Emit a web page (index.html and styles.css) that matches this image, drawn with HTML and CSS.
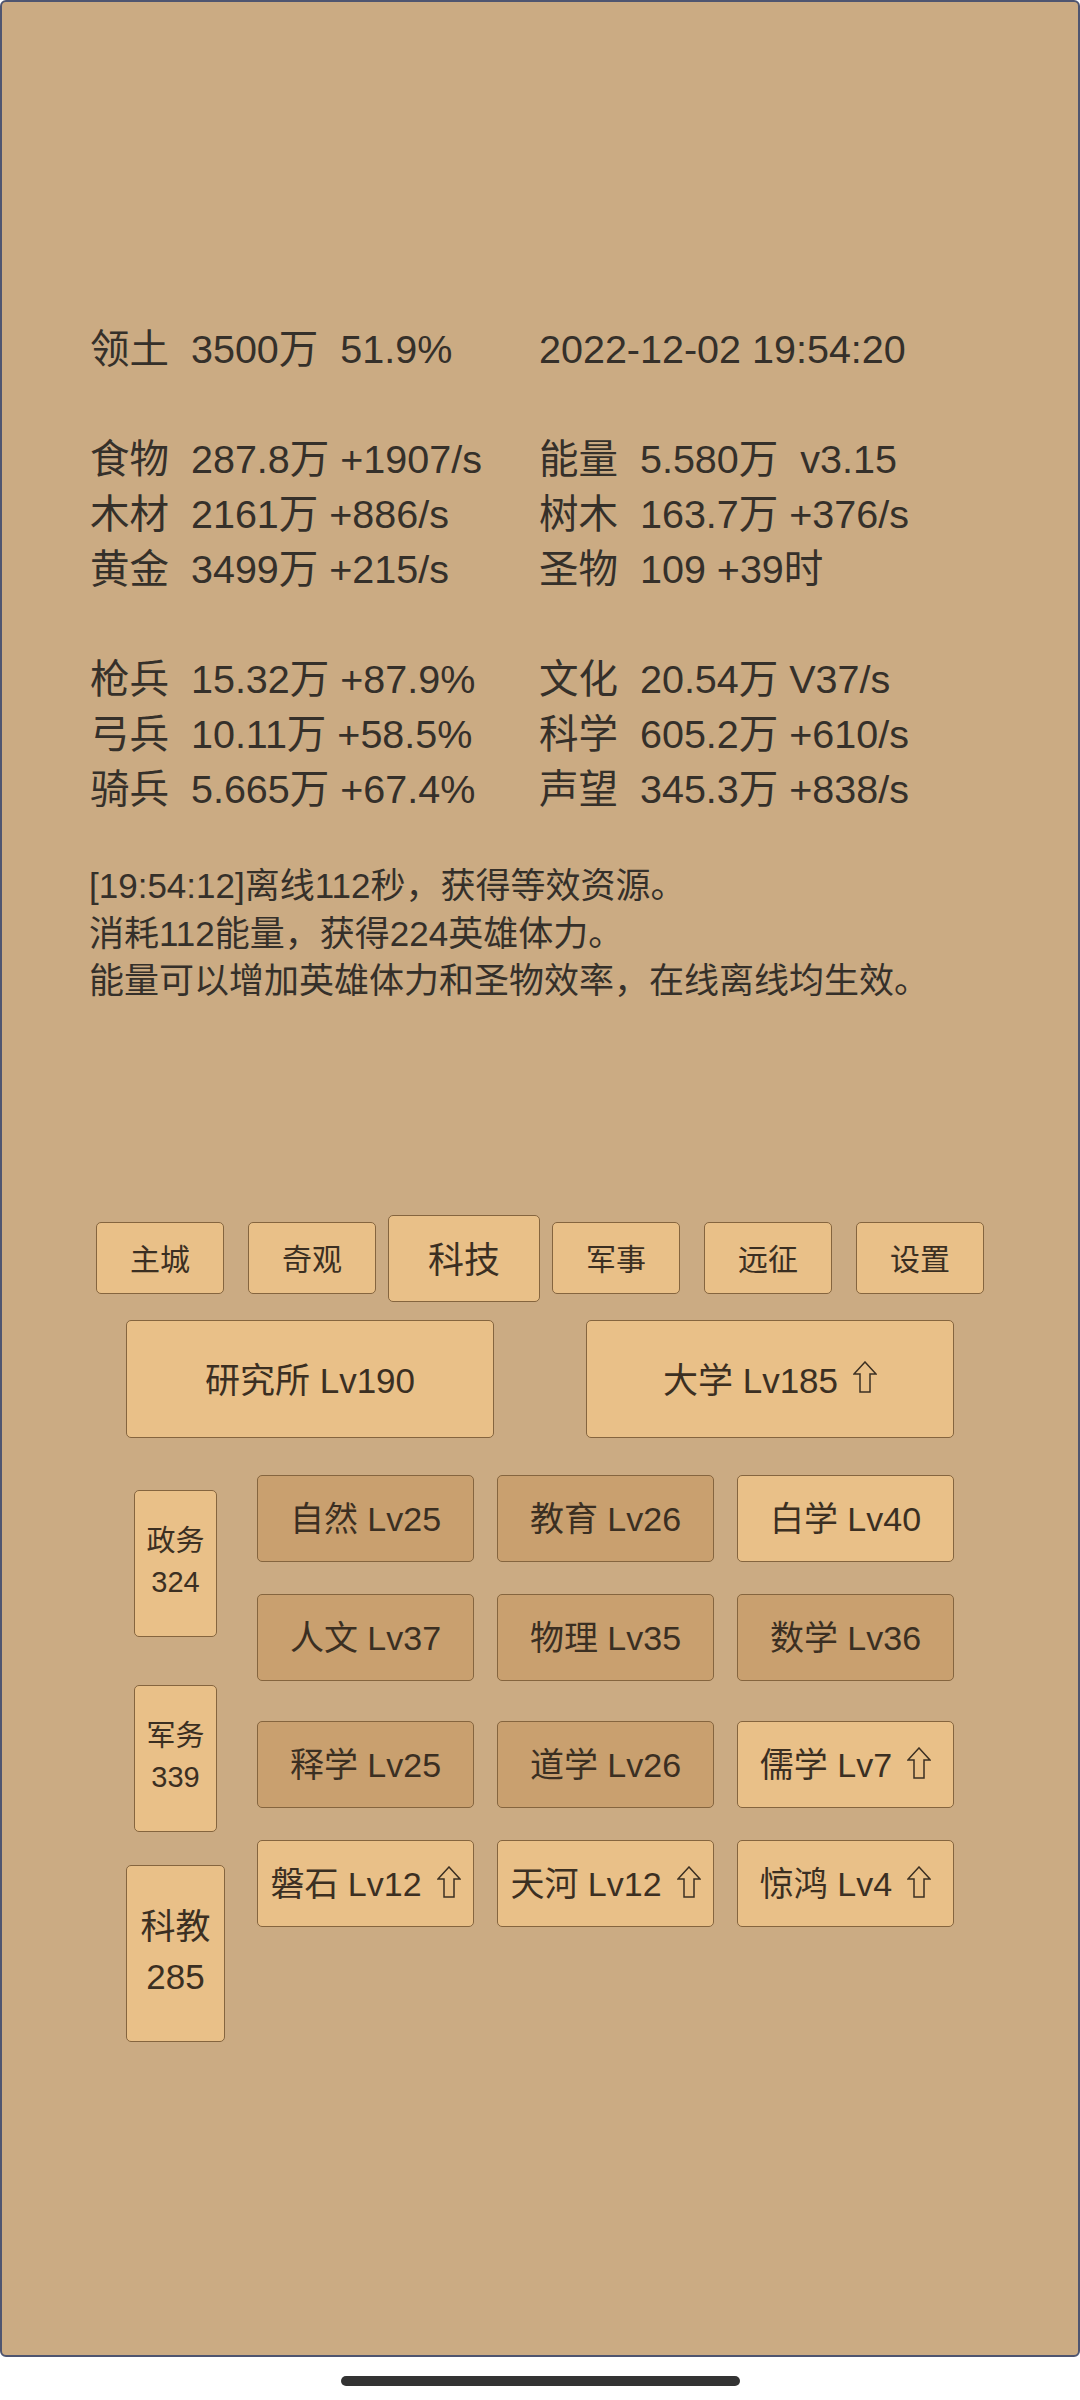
FILE: index.html
```html
<!DOCTYPE html>
<html lang="zh">

<head>
    <meta charset="UTF-8">
    <meta name="viewport" content="width=device-width, initial-scale=1.0">
    <title>科技</title>
    <link rel="stylesheet" href="styles.css">
</head>

<body>
    <div class="screen">
        <!-- resource overview -->
        <section class="stats">
            <p>领土  3500万  51.9%</p>
            <p>2022-12-02 19:54:20</p>
            <div class="blank"></div>
            <p>食物  287.8万 +1907/s</p>
            <p>能量  5.580万  v3.15</p>
            <p>木材  2161万 +886/s</p>
            <p>树木  163.7万 +376/s</p>
            <p>黄金  3499万 +215/s</p>
            <p>圣物  109 +39时</p>
            <div class="blank"></div>
            <p>枪兵  15.32万 +87.9%</p>
            <p>文化  20.54万 V37/s</p>
            <p>弓兵  10.11万 +58.5%</p>
            <p>科学  605.2万 +610/s</p>
            <p>骑兵  5.665万 +67.4%</p>
            <p>声望  345.3万 +838/s</p>
        </section>

        <!-- offline log -->
        <section class="log">
            <p>[19:54:12]离线112秒，获得等效资源。</p>
            <p>消耗112能量，获得224英雄体力。</p>
            <p>能量可以增加英雄体力和圣物效率，在线离线均生效。</p>
        </section>

        <!-- main tabs -->
        <nav class="tabs">
            <button class="tab">主城</button>
            <button class="tab">奇观</button>
            <button class="tab active">科技</button>
            <button class="tab">军事</button>
            <button class="tab">远征</button>
            <button class="tab">设置</button>
        </nav>

        <div class="buildings">
            <button class="btn big">研究所 Lv190</button>
            <button class="btn big">大学 Lv185<svg class="up" viewBox="0 0 24 32"><path d="M12 1 L23 13 L17 13 L17 31 L7 31 L7 13 L1 13 Z"/></svg></button>
        </div>

        <div class="tech">
            <div class="side">
                <div class="slot"><button class="btn cat">政务<br>324</button></div>
                <div class="slot"><button class="btn cat">军务<br>339</button></div>
                <div class="slot"><button class="btn cat active">科教<br>285</button></div>
            </div>

            <div class="cells">
                <div class="cell-group">
                    <button class="btn cell done">自然 Lv25</button>
                    <button class="btn cell done">教育 Lv26</button>
                    <button class="btn cell">白学 Lv40</button>
                    <button class="btn cell done">人文 Lv37</button>
                    <button class="btn cell done">物理 Lv35</button>
                    <button class="btn cell done">数学 Lv36</button>
                </div>
                <div class="cell-group">
                    <button class="btn cell done">释学 Lv25</button>
                    <button class="btn cell done">道学 Lv26</button>
                    <button class="btn cell">儒学 Lv7<svg class="up" viewBox="0 0 24 32"><path d="M12 1 L23 13 L17 13 L17 31 L7 31 L7 13 L1 13 Z"/></svg></button>
                    <button class="btn cell">磐石 Lv12<svg class="up" viewBox="0 0 24 32"><path d="M12 1 L23 13 L17 13 L17 31 L7 31 L7 13 L1 13 Z"/></svg></button>
                    <button class="btn cell">天河 Lv12<svg class="up" viewBox="0 0 24 32"><path d="M12 1 L23 13 L17 13 L17 31 L7 31 L7 13 L1 13 Z"/></svg></button>
                    <button class="btn cell">惊鸿 Lv4<svg class="up" viewBox="0 0 24 32"><path d="M12 1 L23 13 L17 13 L17 31 L7 31 L7 13 L1 13 Z"/></svg></button>
                </div>
            </div>
        </div>
    </div>

    <div class="home">
        <div class="home-bar"></div>
    </div>
</body>

</html>
```

FILE: styles.css
```css
/* General Styles */
body {
    margin: 0;
    background-color: #fff;
    font-family: 'Liberation Sans', 'Noto Sans CJK SC', sans-serif;
    color: #35302a;
}

p {
    margin: 0;
}

.screen {
    box-sizing: border-box;
    height: 2357px;
    background-color: #cbab83;
    border: 2px solid #4f5570;
    border-radius: 6px;
    padding-top: 320px;
}

/* Stats */
.stats {
    display: grid;
    grid-template-columns: 449px auto;
    grid-auto-rows: 55px;
    padding-left: 88px;
    font-size: 39.5px;
    line-height: 55px;
    white-space: pre;
}

.stats .blank {
    grid-column: 1 / -1;
}

.log {
    margin-top: 45px;
    padding-left: 87px;
    font-size: 35px;
    line-height: 47.5px;
}

/* Buttons */
.btn {
    box-sizing: border-box;
    display: inline-flex;
    align-items: center;
    justify-content: center;
    padding: 0 0 3px;
    background-color: #e9c088;
    border: 1.5px solid #85653f;
    border-radius: 5px;
    font-family: 'Liberation Sans', 'Noto Sans CJK SC', sans-serif;
    color: #3b2f22;
    cursor: pointer;
}

.tabs {
    display: flex;
    justify-content: center;
    align-items: center;
    height: 87px;
    margin-top: 210px;
}

.tab {
    box-sizing: border-box;
    width: 128px;
    height: 72px;
    margin: 0 12px;
    padding: 0 0 3px;
    background-color: #e9c088;
    border: 1.5px solid #85653f;
    border-radius: 5px;
    font-family: 'Liberation Sans', 'Noto Sans CJK SC', sans-serif;
    font-size: 30px;
    color: #3b2f22;
}

.tab.active {
    width: 152px;
    height: 87px;
    margin: 0;
    font-size: 36px;
}

.buildings {
    display: flex;
    justify-content: space-between;
    width: 828px;
    margin: 18px auto 0;
}

.big {
    width: 368px;
    height: 118px;
    font-size: 35px;
}

.up {
    width: 24px;
    height: 32px;
    margin-left: 15px;
    fill: none;
    stroke: #3b2f22;
    stroke-width: 1.5;
}

/* Tech tree */
.tech {
    display: flex;
    width: 828px;
    margin: 28px auto 0;
    gap: 32px;
}

.side {
    display: flex;
    flex-direction: column;
    width: 99px;
}

.slot {
    display: flex;
    align-items: center;
    justify-content: center;
    height: 195px;
}

.cat {
    width: 83px;
    height: 147px;
    font-size: 29px;
    line-height: 41px;
}

.cat.active {
    width: 99px;
    height: 177px;
    font-size: 35px;
    line-height: 50px;
}

.cells {
    padding-top: 9px;
}

.cell-group {
    display: grid;
    grid-template-columns: repeat(3, 217px);
    grid-auto-rows: 87px;
    column-gap: 23px;
    row-gap: 32px;
}

.cell-group + .cell-group {
    margin-top: 40px;
}

.cell {
    width: 100%;
    height: 100%;
    font-size: 34px;
    white-space: nowrap;
}

.cell.done {
    background-color: #c9a06f;
}

/* Home indicator */
.home {
    display: flex;
    justify-content: center;
    padding-top: 19px;
}

.home-bar {
    width: 399px;
    height: 10px;
    border-radius: 5px;
    background-color: #333;
}
```
